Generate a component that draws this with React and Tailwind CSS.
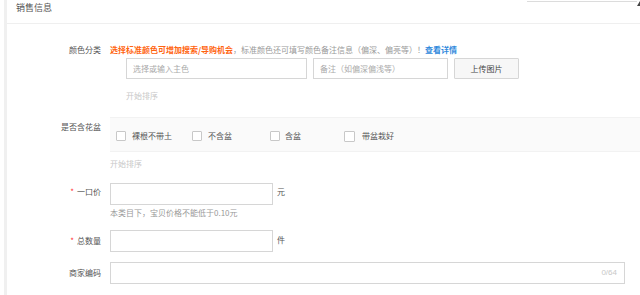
export default function App() {
  const font = "font-['Noto_Sans_CJK_SC','Noto_Sans',sans-serif]";
  return (
    <div className={`w-[640px] h-[295px] bg-white overflow-hidden pl-[4px] ${font}`}>
      <div className="h-full border-l-[3px] border-[#f0f0f0] flex flex-col">
        {/* header */}
        <div className="h-[24px] shrink-0 border-b border-[#efefef] flex items-start justify-between pl-[9px]">
          <div className="pt-[2px] text-[9px] leading-[12px] text-[#555]">销售信息</div>
          <div className="flex items-start">
            <div className="w-[110px] h-[2px] border-b border-[#dcdcdc]"></div>
            <svg width="3" height="6" viewBox="0 0 3 6" className="mt-[1px]">
              <path d="M3 0 L3 5 L0 5 Z" fill="#444" />
            </svg>
          </div>
        </div>

        {/* 颜色分类 */}
        <div className="flex mt-[20px]">
          <div className="w-[94px] shrink-0 text-right text-[8px] leading-[12px] text-[#555]">颜色分类</div>
          <div className="ml-[9px] flex-1 flex flex-col">
            <div className="text-[8px] leading-[12px] whitespace-nowrap">
              <span className="text-[#ff6410] font-semibold">选择标准颜色可增加搜索/导购机会</span>
              <span className="text-[#999]">，标准颜色还可填写颜色备注信息（偏深、偏亮等）！</span>
              <span className="text-[#3089dc] font-semibold">查看详情</span>
            </div>
            <div className="flex mt-[2px] ml-[16px] gap-[6px]">
              <div className="w-[181px] h-[21px] border border-[#d6d6d6] flex items-center pl-[6px] text-[8px] text-[#aaa]">选择或输入主色</div>
              <div className="w-[135px] h-[21px] border border-[#d6d6d6] flex items-center pl-[6px] text-[8px] text-[#aaa]">备注（如偏深偏浅等）</div>
              <div className="w-[65px] h-[21px] border border-[#d6d6d6] bg-[#f7f7f7] rounded-[1px] flex items-center justify-center text-[8px] text-[#444]">上传图片</div>
            </div>
            <div className="mt-[11px] ml-[16px] text-[8px] leading-[12px] text-[#c8c8c8]">开始排序</div>
          </div>
        </div>

        {/* 是否含花盆 */}
        <div className="flex mt-[15px]">
          <div className="w-[94px] shrink-0 text-right text-[8px] leading-[12px] text-[#555] pt-[4px]">是否含花盆</div>
          <div className="ml-[9px] flex-1 flex flex-col">
            <div className="h-[35px] bg-[#fafafa] border-y border-[#f2f2f2] flex items-center pl-[6px] pt-[3px] text-[8px] text-[#555]">
              <div className="w-[76px] flex items-center gap-[6px]">
                <span className="w-[10px] h-[10px] border border-[#c8c8c8] bg-white rounded-[1px]"></span>
                <span>裸根不带土</span>
              </div>
              <div className="w-[78px] flex items-center gap-[6px]">
                <span className="w-[10px] h-[10px] border border-[#c8c8c8] bg-white rounded-[1px]"></span>
                <span>不含盆</span>
              </div>
              <div className="w-[74px] flex items-center gap-[5px]">
                <span className="w-[10px] h-[10px] border border-[#c8c8c8] bg-white rounded-[1px]"></span>
                <span>含盆</span>
              </div>
              <div className="flex items-center gap-[7px]">
                <span className="w-[11px] h-[11px] border border-[#c8c8c8] bg-white rounded-[1px]"></span>
                <span>带盆栽好</span>
              </div>
            </div>
            <div className="mt-[6px] text-[8px] leading-[12px] text-[#c8c8c8]">开始排序</div>
          </div>
        </div>

        {/* 一口价 */}
        <div className="flex items-center mt-[13px]">
          <div className="w-[94px] shrink-0 text-right text-[8px] leading-[12px] text-[#555] pb-[4px]">
            <span className="text-[#f33] mr-[3px]">*</span>一口价
          </div>
          <div className="ml-[9px] w-[163px] h-[22px] border border-[#d6d6d6]"></div>
          <div className="ml-[4px] text-[8px] leading-[12px] text-[#555] pb-[5px]">元</div>
        </div>
        <div className="ml-[103px] mt-[2px] text-[8px] leading-[12px] text-[#999]">本类目下，宝贝价格不能低于0.10元</div>

        {/* 总数量 */}
        <div className="flex items-center mt-[11px]">
          <div className="w-[94px] shrink-0 text-right text-[8px] leading-[12px] text-[#555]">
            <span className="text-[#f33] mr-[3px]">*</span>总数量
          </div>
          <div className="ml-[9px] w-[163px] h-[22px] border border-[#d6d6d6]"></div>
          <div className="ml-[4px] text-[8px] leading-[12px] text-[#555] pb-[2px]">件</div>
        </div>

        {/* 商家编码 */}
        <div className="flex items-center mt-[10px]">
          <div className="w-[94px] shrink-0 text-right text-[8px] leading-[12px] text-[#555]">商家编码</div>
          <div className="ml-[9px] w-[515px] h-[22px] border border-[#d6d6d6] flex items-center justify-end pr-[7px] text-[8px] text-[#c8c8c8] font-['Liberation_Sans',sans-serif]">0/64</div>
        </div>
      </div>
    </div>
  );
}
